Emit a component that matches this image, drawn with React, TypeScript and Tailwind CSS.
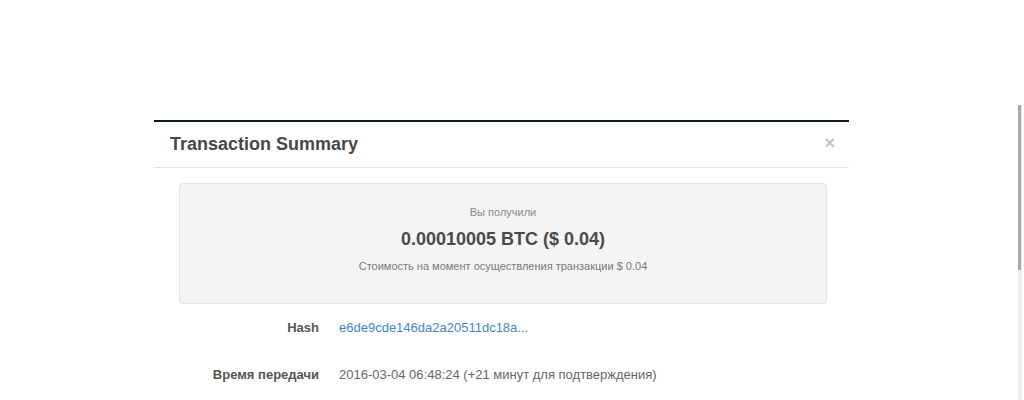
import React from 'react';

interface Row {
  label: string;
  value: string;
  link?: boolean;
}

const rows: Row[] = [
  { label: 'Hash', value: 'e6de9cde146da2a20511dc18a...', link: true },
  { label: 'Время передачи', value: '2016-03-04 06:48:24 (+21 минут для подтверждения)' },
];

export default function App() {
  return (
    <div className="relative h-[400px] w-[1024px] overflow-hidden bg-white font-['Liberation_Sans',Arial,sans-serif]">
      <div className="pl-[154px] pt-[120px]">
        <div className="w-[695px] border-t-2 border-[#0b1c26] bg-white">
          {/* header */}
          <div className="flex h-[46px] items-center justify-between border-b border-[#e5e5e5] pb-[2px] pl-4 pr-[14px]">
            <h4 className="text-[18px] font-bold leading-[22px] text-[#484848]">Transaction Summary</h4>
            <span className="mb-[2px] text-[18px] font-bold leading-none text-[#c4c4c4]">×</span>
          </div>

          {/* body */}
          <div className="pl-[25px] pr-[22px] pt-[15px]">
            <div className="flex h-[121px] flex-col items-center rounded border border-[#e3e3e3] bg-[#f4f4f4] pt-[20px]">
              <p className="text-[11px] leading-4 text-[#8a8a8a]">Вы получили</p>
              <p className="mt-2 text-[18px] font-bold leading-[22px] text-[#4a4a4a]">0.00010005 BTC ($ 0.04)</p>
              <p className="mt-2 text-[11px] leading-4 text-[#7a7a7a]">
                Стоимость на момент осуществления транзакции $ 0.04
              </p>
            </div>

            <div className="mt-[14px] flex flex-col gap-[27px]">
              {rows.map((row) => (
                <div key={row.label} className="flex text-[13px] leading-5">
                  <div className="w-[140px] text-right font-bold text-[#555]">{row.label}</div>
                  <div className={row.link ? 'pl-5 text-[#3c88c6]' : 'pl-5 text-[#666]'}>{row.value}</div>
                </div>
              ))}
            </div>
          </div>
        </div>
      </div>

      {/* scrollbar of the frame */}
      <div className="absolute right-[2px] top-[105px] h-[295px] w-[4px] bg-[#efefef]">
        <div className="h-[165px] w-[3px] bg-[#a8a8a8]" />
      </div>
    </div>
  );
}
